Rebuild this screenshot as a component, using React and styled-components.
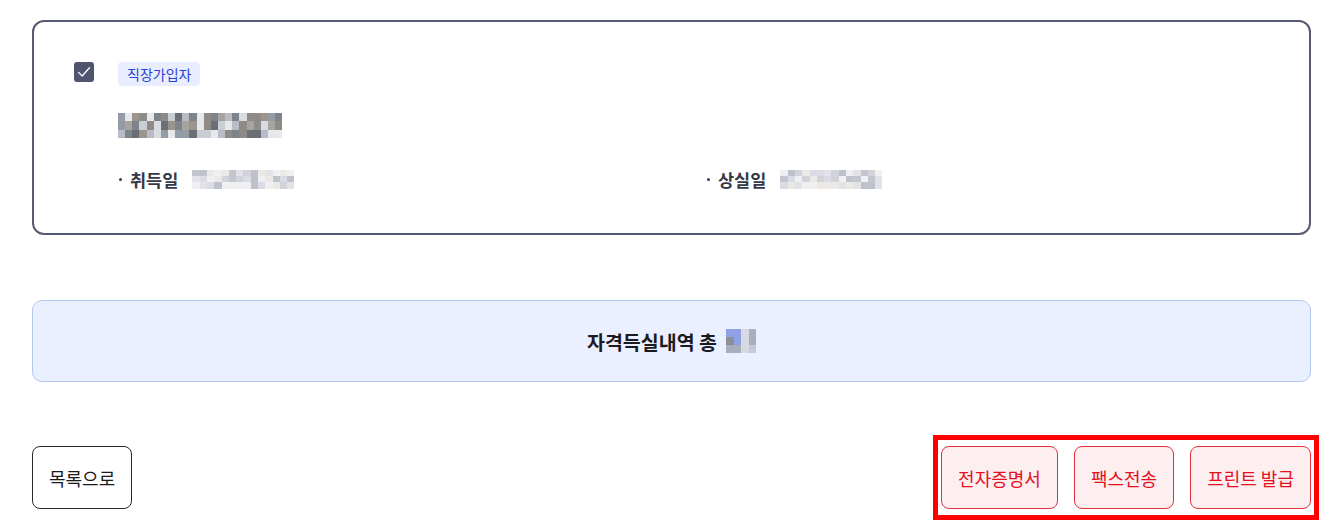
import React from 'react';
import styled, { createGlobalStyle } from 'styled-components';

const GlobalStyle = createGlobalStyle`
  * { box-sizing: border-box; }
  body {
    margin: 0;
    background: #fff;
    font-family: "Noto Sans CJK KR", "Noto Sans", sans-serif;
    color: #222;
  }
`;

const Page = styled.div`
  padding: 20px 32px 0 32px;
  width: 1343px;
  display: flex;
  flex-direction: column;
`;

const Card = styled.section`
  border: 2px solid #565a74;
  border-radius: 12px;
  padding: 40px 40px 42px 40px;
  display: flex;
  align-items: flex-start;
`;

const Check = styled.span`
  width: 20px;
  height: 20px;
  border-radius: 3px;
  background: #51546f;
  display: flex;
  align-items: center;
  justify-content: center;
  margin-right: 24px;
  flex: none;
`;

const Body = styled.div`
  flex: 1;
  display: flex;
  flex-direction: column;
  align-items: flex-start;
`;

const Badge = styled.span`
  height: 24px;
  padding: 0 9px;
  border-radius: 4px;
  background: #e8eeff;
  color: #2a3fd6;
  font-size: 14px;
  line-height: 24px;
`;

const NameBlur = styled.div`
  margin-top: 27px;
`;

const InfoGrid = styled.div`
  margin-top: 29px;
  display: grid;
  grid-template-columns: 588px 1fr;
  width: 100%;
`;

const InfoItem = styled.div`
  display: flex;
  align-items: center;
  height: 24px;
`;

const Dot = styled.span`
  width: 3px;
  height: 3px;
  border-radius: 50%;
  background: #3a3c4c;
  margin: 0 8px 0 1px;
`;

const Label = styled.span`
  font-size: 17.5px;
  font-weight: 700;
  color: #363848;
  margin-right: 14px;
`;

const Summary = styled.div`
  margin-top: 65px;
  height: 82px;
  border: 1px solid #b4c7f3;
  border-radius: 10px;
  background: #eaf0ff;
  display: flex;
  align-items: center;
  justify-content: center;
  gap: 9px;
`;

const SummaryText = styled.span`
  font-size: 19.5px;
  font-weight: 700;
  color: #1b1b1f;
`;

const Footer = styled.div`
  margin-top: 64px;
  display: flex;
  justify-content: space-between;
  align-items: flex-start;
`;

const Button = styled.button`
  height: 63px;
  padding: 0 16px;
  font-family: inherit;
  font-size: 18px;
  border-radius: 8px;
  cursor: pointer;
  border: 1px solid ${p => (p.$danger ? '#e4323d' : '#2a2a2a')};
  background: ${p => (p.$danger ? '#fdeef0' : '#fff')};
  color: ${p => (p.$danger ? '#e4101f' : '#1a1a1a')};
`;

const Actions = styled.div`
  display: flex;
  gap: 16px;
  padding: 6px 3px;
  border: 5px solid #ff0000;
  margin-right: -8px;
  margin-top: -11px;
`;

const MosaicGrid = styled.div`
  display: grid;
  grid-template-columns: repeat(${p => p.$cols}, ${p => p.$cell}px);
  grid-auto-rows: ${p => p.$cellH || p.$cell}px;
  filter: blur(0.5px);
`;

const rand = seed => {
  let s = seed;
  return () => {
    s = (s * 9301 + 49297) % 233280;
    return s / 233280;
  };
};

const Mosaic = ({ cols, rows, cell, cellH, palette, seed }) => {
  const r = rand(seed);
  const cells = [];
  for (let i = 0; i < cols * rows; i++) {
    cells.push(palette[Math.floor(r() * palette.length)]);
  }
  return (
    <MosaicGrid $cols={cols} $cell={cell} $cellH={cellH}>
      {cells.map((c, i) => (
        <span key={i} style={{ background: c }} />
      ))}
    </MosaicGrid>
  );
};

const namePalette = ['#9c958e', '#7d848c', '#b7bcc6', '#8e8a86', '#a7a39f', '#c9cdd4', '#6b6e74', '#d8dbe0', '#959ca6', '#e6e8ec'];
const datePalette = ['#e2e2e8', '#d2d3da', '#c4c6cf', '#ebe8e6', '#d9dce4', '#f0f0f3', '#bfc2ca'];

const App = () => (
  <>
    <GlobalStyle />
    <Page>
      <Card>
        <Check>
          <svg width="16" height="16" viewBox="0 0 16 16">
            <polyline points="2.5,8.4 6.2,12 13.5,3.8" fill="none" stroke="#fff" strokeWidth="1.3" strokeLinecap="round" strokeLinejoin="round" />
          </svg>
        </Check>
        <Body>
          <Badge>직장가입자</Badge>
          <NameBlur>
            <Mosaic cols={23} rows={3} cell={7.15} cellH={8.4} palette={namePalette} seed={17} />
          </NameBlur>
          <InfoGrid>
            <InfoItem>
              <Dot />
              <Label>취득일</Label>
              <Mosaic cols={14} rows={3} cell={7.3} cellH={6.3} palette={datePalette} seed={5} />
            </InfoItem>
            <InfoItem>
              <Dot />
              <Label>상실일</Label>
              <Mosaic cols={14} rows={3} cell={7.3} cellH={6.3} palette={datePalette} seed={41} />
            </InfoItem>
          </InfoGrid>
        </Body>
      </Card>

      <Summary>
        <SummaryText>자격득실내역 총</SummaryText>
        <Mosaic cols={4} rows={3} cell={7.5} cellH={8} palette={['#b3bff0', '#8fa0e4', '#a9aebd', '#8c8f99', '#c4c9d6', '#d6d9e2']} seed={3} />
      </Summary>

      <Footer>
        <Button>목록으로</Button>
        <Actions>
          <Button $danger>전자증명서</Button>
          <Button $danger>팩스전송</Button>
          <Button $danger>프린트 발급</Button>
        </Actions>
      </Footer>
    </Page>
  </>
);

export default App;
